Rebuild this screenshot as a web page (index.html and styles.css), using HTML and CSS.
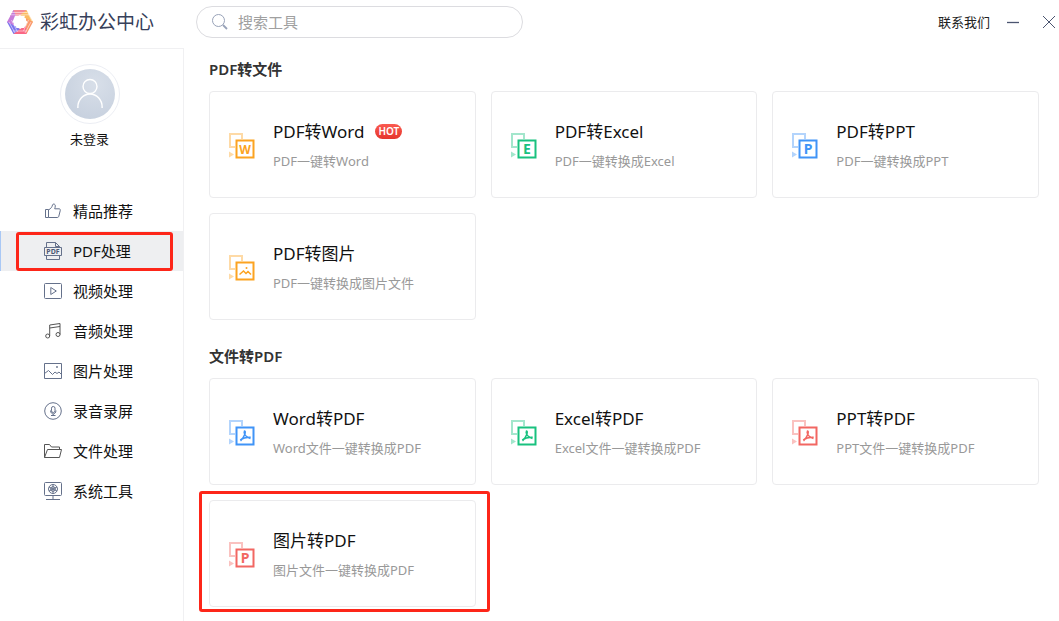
FILE: index.html
```html
<!DOCTYPE html>
<html lang="zh-CN">
<head>
<meta charset="utf-8">
<meta name="viewport" content="width=device-width, initial-scale=1">
<title>彩虹办公中心</title>
<link rel="stylesheet" href="styles.css">
</head>
<body>
<svg class="sprite" aria-hidden="true">
  <symbol id="convert" viewBox="0 0 27 27">
    <path d="M6 14H1V1h12v5" fill="none" stroke="currentColor" stroke-width="2" opacity=".4"/>
    <path d="M0 18.500l5 3-5 3z" fill="currentColor" opacity=".4"/>
    <path d="M7.500 7.500h17v17h-17z" fill="none" stroke="currentColor" stroke-width="2"/>
  </symbol>
  <symbol id="acrobat" viewBox="0 0 27 27">
    <path d="M15 11.200c1.500-.6 1.500 1.200.8 3-1 2.800-2.500 5-4.300 6.800M15 11.500c.2 3 2.600 5.800 6.500 7M11.200 20c3-2.200 6.500-2.900 10.500-2.700" fill="none" stroke="currentColor" stroke-width="1.500"/>
  </symbol>
</svg>
<div class="app">
  <header class="brand">
    <svg class="logo" viewBox="0 0 26 24" aria-hidden="true">
      <path d="M6.500 0h13L16 6.500 13 5 7 8.500 3.300 6z" fill="#f58c98"/>
      <path d="M19.500 0L26 12l-7 3.500v-7L13 5z" fill="#fbbb62"/>
      <path d="M26 12l-6.500 12-3-6.800 2.500-1.700v-7z" fill="#fa986c"/>
      <path d="M19.500 24h-13l3-6.500L13 19l6-3.500z" fill="#fa6684"/>
      <path d="M6.500 24L0 12l7-3.500v7l6 3.500z" fill="#7c74ee"/>
      <path d="M0 12L6.500 0l2.800 7L7 8.500v7z" fill="#c77bda"/>
      <path d="M5 2.500h15M4 4.800h18M2 12l6 11M4.500 10l6 12M24 12l-6 11M21.500 10l-5 11M20.500 2l4.500 9M6 21h14" fill="none" stroke="#fff" stroke-width=".8" opacity=".65"/>
      <path d="M8 5.800h10l-1 2.500 3.500 3.700-3.500 6H9l1-2.500L5.500 12z" fill="#fff"/>
    </svg>
    <h1 class="brand-name">彩虹办公中心</h1>
  </header>

  <div class="topbar">
    <label class="search">
      <svg class="search-icon" viewBox="0 0 16 16" aria-hidden="true"><circle cx="6.500" cy="6.500" r="6"/><path d="M11 11l4 4" stroke-width="1.800"/></svg>
      <input class="search-input" type="search" placeholder="搜索工具" aria-label="搜索工具">
    </label>
    <div class="window-tools">
      <a class="contact" href="#">联系我们</a>
      <button class="window-button" type="button" aria-label="最小化"><svg class="window-icon" viewBox="0 0 14 14"><path d="M1 7.500h12" stroke-width="1.300"/></svg></button>
      <button class="window-button" type="button" aria-label="关闭"><svg class="window-icon" viewBox="0 0 14 14"><path d="M1 1l12 12M13 1L1 13"/></svg></button>
    </div>
  </div>

  <aside class="sidebar">
    <button class="account" type="button">
      <span class="avatar"><svg class="avatar-icon" viewBox="0 0 30 34" aria-hidden="true"><circle cx="15" cy="9" r="7.500"/><path d="M2 32v-1a13 14 0 0 1 26 0v1"/></svg></span>
      <span>未登录</span>
    </button>
    <nav class="nav">
      <a class="nav-item" href="#"><svg class="nav-icon" viewBox="0 0 18 18" aria-hidden="true"><path d="M1.500 7.500h3v8h-3zM4.500 8c2.500-1.500 3.500-3 4-5 .3-1.500 2.800-1.300 2.800.8 0 1-.3 2-.6 3h4.300c1 0 1.500.7 1.300 1.500l-1.500 6c-.2.800-.7 1.200-1.500 1.200H4.500"/></svg>精品推荐</a>
      <a class="nav-item active" href="#" aria-current="page"><svg class="nav-icon" viewBox="0 0 18 18" aria-hidden="true"><path d="M2.500 5.500v-5h9l4 4v1M11.500.5v4h4M.5 5.500h17v8H.5zM2.500 13.500v4h13v-4"/><text class="pdf-mark" x="9" y="12" text-anchor="middle">PDF</text></svg>PDF处理</a>
      <a class="nav-item" href="#"><svg class="nav-icon" viewBox="0 0 18 18" aria-hidden="true"><rect x=".5" y="1.500" width="17" height="15" rx="1"/><path d="M6.800 5.500v7l5.500-3.500z"/></svg>视频处理</a>
      <a class="nav-item dark" href="#"><svg class="nav-icon" viewBox="0 0 18 18" aria-hidden="true"><circle cx="3.700" cy="14" r="2"/><circle cx="14" cy="12.500" r="2"/><path d="M5.700 14V3L16 1.500v11M5.700 6L16 4.500"/></svg>音频处理</a>
      <a class="nav-item" href="#"><svg class="nav-icon" viewBox="0 0 18 18" aria-hidden="true"><path d="M.5 1.500h17v15H.5zM.5 11.500l4-3 4 4 2.500-2.500 2 1.500 2-1.500 2.500 2.500"/><circle cx="13" cy="5" r=".6"/></svg>图片处理</a>
      <a class="nav-item" href="#"><svg class="nav-icon" viewBox="0 0 18 18" aria-hidden="true"><circle cx="9" cy="9" r="8.300"/><rect x="7.500" y="4.500" width="3.500" height="6" rx="1.700"/><path d="M6.500 8.500c.2 4.500 5.300 4.500 5.500 0M9.200 12v1.500M7 13.500h4.500"/></svg>录音录屏</a>
      <a class="nav-item dark" href="#"><svg class="nav-icon" viewBox="0 0 18 18" aria-hidden="true"><path d="M.5 15.500v-13h5l2 2.500h8v2.500M.5 15.500l3-8h14l-2 8z"/></svg>文件处理</a>
      <a class="nav-item" href="#"><svg class="nav-icon" viewBox="0 0 18 18" aria-hidden="true"><rect x=".5" y=".5" width="17" height="13" rx="1"/><circle cx="9" cy="7" r="4.500"/><path d="M9 4.500l2.200 1.200v2.600L9 9.500 6.800 8.300V5.700zM9 2.500v9M5 5l8 4M5 9l8-4M9 13.500v4M2 17.500h14"/></svg>系统工具</a>
    </nav>
  </aside>

  <main class="content">
    <section class="group">
      <h2 class="group-title">PDF转文件</h2>
      <div class="cards">
        <button class="card" type="button"><svg class="card-icon orange" viewBox="0 0 27 27" aria-hidden="true"><use href="#convert"/><text class="letter" x="16" y="20.500">W</text></svg><span class="card-text"><span class="card-title">PDF转Word <span class="hot">HOT</span></span><span class="card-note">PDF一键转Word</span></span></button>
        <button class="card" type="button"><svg class="card-icon green" viewBox="0 0 27 27" aria-hidden="true"><use href="#convert"/><text class="letter large" x="16" y="21">E</text></svg><span class="card-text"><span class="card-title">PDF转Excel</span><span class="card-note">PDF一键转换成Excel</span></span></button>
        <button class="card" type="button"><svg class="card-icon blue" viewBox="0 0 27 27" aria-hidden="true"><use href="#convert"/><text class="letter large" x="16" y="21">P</text></svg><span class="card-text"><span class="card-title">PDF转PPT</span><span class="card-note">PDF一键转换成PPT</span></span></button>
        <button class="card" type="button"><svg class="card-icon orange" viewBox="0 0 27 27" aria-hidden="true"><use href="#convert"/><path d="M10.500 19.500l4-3.500 2.500 2.500 2-2 3 3" fill="none" stroke="currentColor" stroke-width="1.500"/><circle cx="17.500" cy="13" r="1" fill="currentColor"/></svg><span class="card-text"><span class="card-title">PDF转图片</span><span class="card-note">PDF一键转换成图片文件</span></span></button>
      </div>
    </section>
    <section class="group">
      <h2 class="group-title">文件转PDF</h2>
      <div class="cards">
        <button class="card" type="button"><svg class="card-icon blue" viewBox="0 0 27 27" aria-hidden="true"><use href="#convert"/><use href="#acrobat"/></svg><span class="card-text"><span class="card-title">Word转PDF</span><span class="card-note">Word文件一键转换成PDF</span></span></button>
        <button class="card" type="button"><svg class="card-icon green" viewBox="0 0 27 27" aria-hidden="true"><use href="#convert"/><use href="#acrobat"/></svg><span class="card-text"><span class="card-title">Excel转PDF</span><span class="card-note">Excel文件一键转换成PDF</span></span></button>
        <button class="card" type="button"><svg class="card-icon red" viewBox="0 0 27 27" aria-hidden="true"><use href="#convert"/><use href="#acrobat"/></svg><span class="card-text"><span class="card-title">PPT转PDF</span><span class="card-note">PPT文件一键转换成PDF</span></span></button>
        <button class="card marked" type="button"><svg class="card-icon red" viewBox="0 0 27 27" aria-hidden="true"><use href="#convert"/><text class="letter large" x="16" y="21">P</text></svg><span class="card-text"><span class="card-title">图片转PDF</span><span class="card-note">图片文件一键转换成PDF</span></span></button>
      </div>
    </section>
  </main>
</div>
</body>
</html>
```

FILE: styles.css
```css
* {
  box-sizing: border-box;
}

body {
  margin: 0;
  background: #fff;
  color: #111;
  font: 13px/20px "Noto Sans", "Noto Sans CJK SC", sans-serif;
}

button,
input {
  font: inherit;
  color: inherit;
}

button {
  padding: 0;
  border: 0;
  background: none;
  cursor: pointer;
}

a {
  color: inherit;
  text-decoration: none;
}

svg {
  flex: none;
}

.sprite {
  position: absolute;
  width: 0;
  height: 0;
}

.app {
  display: grid;
  grid-template-columns: 184px 1fr;
  grid-template-rows: 48px 1fr;
  min-height: 100vh;
}

.brand {
  display: flex;
  align-items: center;
  gap: 7px;
  padding: 0 7px 4px;
}

.logo {
  width: 26px;
  height: 24px;
}

.brand-name {
  margin: 0;
  color: #37405a;
  font-size: 19px;
  font-weight: 400;
  line-height: 28px;
}

.topbar {
  display: flex;
  align-items: center;
  justify-content: space-between;
  gap: 24px;
  padding: 0 3px 4px 12px;
}

.search {
  display: flex;
  align-items: center;
  gap: 10px;
  flex: 0 1 327px;
  height: 32px;
  padding: 0 15px;
  border: 1px solid #dcdce0;
  border-radius: 16px;
}

.search-icon {
  width: 16px;
  height: 16px;
  fill: none;
  stroke: #98a2b8;
}

.search-input {
  flex: 1;
  min-width: 0;
  padding: 0;
  border: 0;
  outline: 0;
  background: none;
  font-size: 15px;
}

.search-input::placeholder {
  color: #a0a0a0;
}

.window-tools {
  display: flex;
  align-items: center;
  color: #222;
}

.window-button {
  display: flex;
  margin-left: 16px;
}

.window-button + .window-button {
  margin-left: 22px;
}

.window-icon {
  width: 14px;
  height: 14px;
  fill: none;
  stroke: #4b5570;
}

.sidebar {
  border-top: 1px solid #f0f0f2;
  border-right: 1px solid #f0f0f2;
}

.account {
  display: flex;
  flex-direction: column;
  align-items: center;
  gap: 5px;
  margin: 15px auto 42px;
  padding-right: 4px;
}

.avatar {
  display: flex;
  align-items: center;
  justify-content: center;
  width: 60px;
  height: 60px;
  padding: 4px;
  border: 1px solid #eceef4;
  border-radius: 50%;
  background: radial-gradient(circle at 60% 30%, #d8dfe9, #c3cddc) content-box;
}

.avatar-icon {
  width: 28px;
  height: 32px;
  fill: none;
  stroke: #fff;
  stroke-width: 1.500;
}

.nav-item {
  position: relative;
  display: flex;
  align-items: center;
  gap: 11px;
  height: 40px;
  padding-left: 44px;
  font-size: 15px;
}

.nav-icon {
  width: 18px;
  height: 18px;
  fill: none;
  stroke: #65718b;
}

.dark .nav-icon {
  stroke: #555;
}

.pdf-mark {
  fill: #4b5875;
  stroke: none;
  font: 700 7px "Noto Sans", sans-serif;
}

.active {
  background: #eeeff1;
  box-shadow: inset 1px 0 #a9c8f5;
}

.active::after,
.marked::after {
  content: "";
  position: absolute;
  border: 3px solid #fd2619;
  border-radius: 3px;
  pointer-events: none;
}

.active::after {
  inset: 1px 10px 0 16px;
}

.content {
  padding: 9px 20px 12px 25px;
}

.group + .group {
  margin-top: 24px;
}

.group-title {
  margin: 0 0 10px;
  color: #333;
  font-size: 15px;
  font-weight: 600;
  line-height: 24px;
}

.cards {
  display: grid;
  grid-template-columns: repeat(3, 1fr);
  gap: 15px;
}

.card {
  position: relative;
  display: flex;
  align-items: center;
  gap: 17px;
  height: 107px;
  padding: 0 19px;
  border: 1px solid #ebebed;
  border-radius: 4px;
  text-align: left;
}

.marked::after {
  inset: -10px -15px -6px -11px;
}

.card-icon {
  width: 27px;
  height: 27px;
  margin-top: 4px;
}

.orange {
  color: #fca321;
}

.green {
  color: #19c17f;
}

.blue {
  color: #4094f7;
}

.red {
  color: #f26762;
}

.letter {
  fill: currentColor;
  font: 700 12px "Noto Sans", sans-serif;
  text-anchor: middle;
}

.large {
  font-size: 14px;
}

.card-text {
  display: flex;
  flex-direction: column;
  gap: 5px;
}

.card-title {
  display: flex;
  align-items: center;
  gap: 11px;
  color: #111;
  font-size: 17px;
  line-height: 28px;
}

.card-note {
  color: #999;
  line-height: 20px;
}

.hot {
  margin-bottom: 2px;
  padding: 0 3px;
  border-radius: 8px;
  background: linear-gradient(#fa5a50, #e5352c);
  color: #fff;
  font-size: 10px;
  font-weight: 600;
  line-height: 15px;
}
```
